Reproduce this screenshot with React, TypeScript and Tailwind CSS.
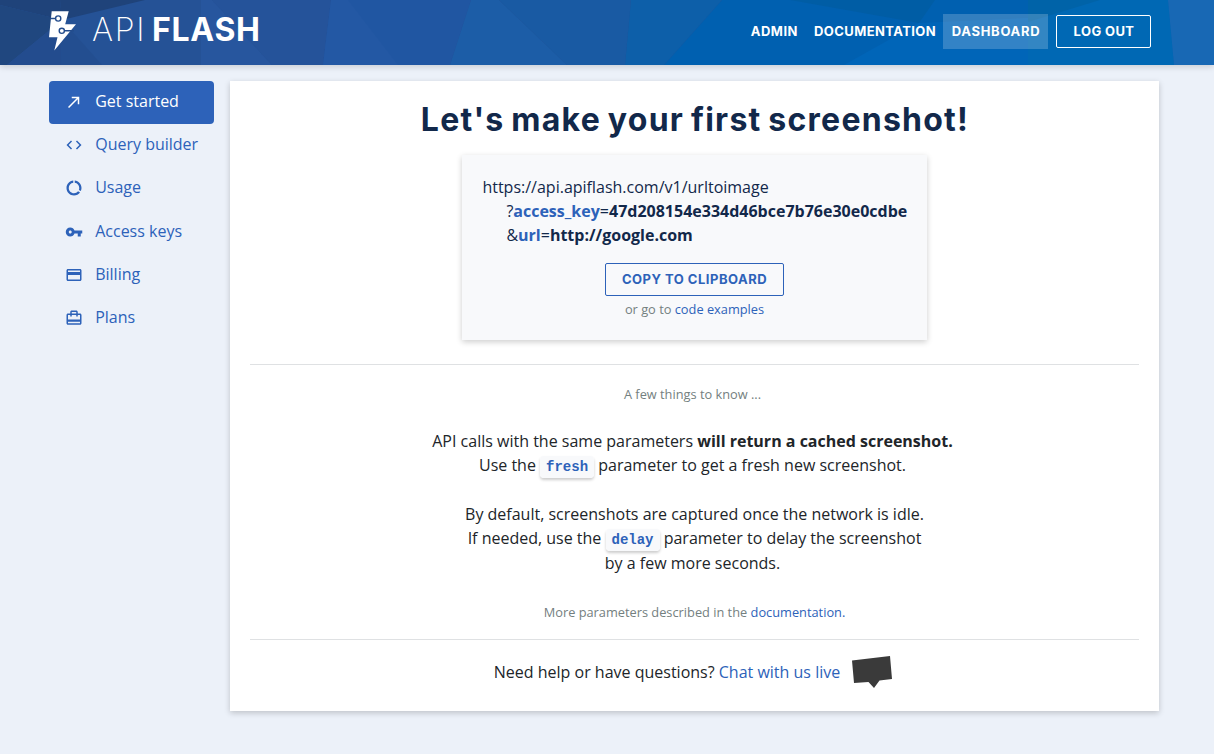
import { useState } from "react";
import type { ReactNode } from "react";
import type { IconType } from "react-icons";
import {
  MdCallMade,
  MdCardTravel,
  MdCode,
  MdDataUsage,
  MdPayment,
  MdVpnKey,
} from "react-icons/md";
import { clsx } from "clsx";

// Types
interface MenuEntry {
  id: string;
  label: string;
  icon: IconType;
}

const MENU: MenuEntry[] = [
  { id: "start", label: "Get started", icon: MdCallMade },
  { id: "query", label: "Query builder", icon: MdCode },
  { id: "usage", label: "Usage", icon: MdDataUsage },
  { id: "keys", label: "Access keys", icon: MdVpnKey },
  { id: "billing", label: "Billing", icon: MdPayment },
  { id: "plans", label: "Plans", icon: MdCardTravel },
];

const ACCESS_KEY = "47d208154e334d46bce7b76e30e0cdbe";

// Faceted banner behind the navigation
function HeaderPattern() {
  return (
    <svg
      className="absolute inset-0 h-full w-full"
      viewBox="0 0 1214 65"
      preserveAspectRatio="none"
      aria-hidden="true"
    >
      <rect width="1214" height="65" fill="#255296" />
      <polygon points="0,0 60,0 62,20 0,5" fill="#1f437a" />
      <polygon points="0,5 62,20 7,65 0,65" fill="#20477f" />
      <polygon points="60,0 145,0 62,20" fill="#1f437a" />
      <polygon points="62,20 61,65 7,65" fill="#234c8e" />
      <polygon points="62,20 102,65 61,65" fill="#234e90" />
      <polygon points="201,0 212,0 272,65 201,65" fill="#27569e" />
      <polygon points="212,0 331,0 323,65 272,65" fill="#25539a" />
      <polygon points="331,0 471,0 450,65 323,65" fill="#2056a2" />
      <polygon points="331,0 348,0 398,65 323,65" fill="#2358a4" />
      <polygon points="471,0 499,0 567,65 450,65" fill="#1c5da7" />
      <polygon points="499,0 631,0 625,65 567,65" fill="#195aa3" />
      <polygon points="631,0 722,0 664,65 625,65" fill="#0d5fa9" />
      <polygon points="722,0 1214,0 1214,65 664,65" fill="#0060b0" />
      <polygon points="790,0 935,0 919,23" fill="#005da5" />
      <polygon points="919,23 1028,18 1028,65 844,65" fill="#0065b8" />
      <polygon points="1028,0 1168,0 1174,65 1028,65" fill="#0068b4" />
      <polygon points="1028,0 1100,0 1028,22" fill="#0063a8" />
      <polygon points="1168,0 1214,0 1214,65 1174,65" fill="#1868b4" />
    </svg>
  );
}

function LogoMark() {
  return (
    <svg className="h-[40px] w-[28px]" viewBox="0 0 28 40" aria-hidden="true">
      <path d="M2.700 0.300h17L16.200 13.300H27L5.300 39.500l3.200-13.200H0z" fill="#fff" />
      <g fill="#fff" stroke="#234c8c" strokeWidth="1.4">
        <path d="M1 7.500h6M16 19.700h9" />
        <circle cx="9.2" cy="7.5" r="2.6" />
        <circle cx="12.8" cy="19.8" r="2.6" />
      </g>
    </svg>
  );
}

function Header() {
  return (
    <header className="relative h-[65px] shadow-[0_2px_6px_rgba(0,0,0,0.15)]">
      <HeaderPattern />
      <div className="relative flex h-full justify-between pl-[49px] pr-[63px]">
        <a href="#" className="flex pt-[11px] text-white">
          <LogoMark />
          <span className="ml-[15px] mt-px flex font-[Inter] text-[32px] leading-9">
            <span className="w-[60px] font-extralight tracking-[1.7px]">API</span>
            <span className="font-bold tracking-[0.7px]">FLASH</span>
          </span>
        </a>
        <nav className="flex items-center pb-[3px] font-[Inter] text-[13px] font-bold text-white">
          <a href="#" className="px-2 pt-[2px] tracking-[0.5px]">ADMIN</a>
          <a href="#" className="pl-2 pr-[7px] pt-[2px] tracking-[0.4px]">DOCUMENTATION</a>
          <a
            href="#"
            className="flex h-[35px] w-[105px] items-center justify-center bg-white/20 pl-px pt-[2px] tracking-[0.7px]"
          >
            DASHBOARD
          </a>
          <button className="ml-2 h-[33px] w-[95px] rounded-[2px] border border-white pl-px pt-[2px] tracking-[0.4px]">
            LOG OUT
          </button>
        </nav>
      </div>
    </header>
  );
}

function Sidebar({ active, onSelect }: { active: string; onSelect: (id: string) => void }) {
  return (
    <aside className="w-[165px] shrink-0">
      {MENU.map(({ id, label, icon: Icon }) => (
        <button
          key={id}
          onClick={() => onSelect(id)}
          className={clsx(
            "flex h-[43.2px] w-full items-center rounded pb-px pl-4 text-left",
            id === active ? "bg-[#2d62b9] text-white" : "text-[#2d62b9]"
          )}
        >
          <Icon className="h-[18px] w-[18px]" />
          <span className="ml-[12.2px] -mt-[2px]">{label}</span>
        </button>
      ))}
    </aside>
  );
}

function Param({ children }: { children: ReactNode }) {
  return (
    <code className="rounded bg-[#f8f9fb] px-[6px] py-[3px] font-['Liberation_Mono',monospace] text-sm font-bold text-[#2d62b9] shadow-[0_2px_3px_rgba(0,0,0,0.2)]">
      {children}
    </code>
  );
}

function Link({ children }: { children: ReactNode }) {
  return (
    <a href="#" className="text-[#2d62b9]">
      {children}
    </a>
  );
}

// Request preview with the copy button
function RequestCard() {
  return (
    <div className="mx-auto h-[185px] w-[465px] bg-[#f8f9fb] px-5 pt-5 shadow-[0_2px_6px_rgba(0,0,0,0.2)]">
      <div className="pl-[0.4px] text-left leading-6 text-[#12284a]">
        <div>https://api.apiflash.com/v1/urltoimage</div>
        <div className="pl-6 whitespace-nowrap">
          ?<b className="text-[#2d62b9]">access_key</b>=<b>{ACCESS_KEY}</b>
        </div>
        <div className="pl-6">
          &amp;<b className="text-[#2d62b9]">url</b>=<b>http://google.com</b>
        </div>
      </div>
      <button className="mt-4 h-[33px] w-[179px] rounded-[2px] border border-[#2d62b9] font-[Inter] text-[13px] font-bold tracking-[0.5px] text-[#2d62b9]">
        COPY TO CLIPBOARD
      </button>
      <p className="mt-[3px] text-[12.8px] leading-5 text-[#748080]">
        or go to <Link>code examples</Link>
      </p>
    </div>
  );
}

export default function App() {
  const [active, setActive] = useState("start");

  return (
    <div className="min-h-screen bg-[#ecf1f9] font-['Open_Sans',sans-serif] text-base text-[#212529]">
      <Header />
      <div className="flex gap-4 pl-[49px] pr-[55px] pt-4">
        <Sidebar active={active} onSelect={setActive} />
        <main className="h-[630px] flex-1 bg-white px-5 text-center shadow-[0_2px_6px_rgba(0,0,0,0.2)]">
          <h1 className="pl-px pt-[19px] font-[Inter] text-[32px] font-bold leading-[40px] tracking-[1.25px] [word-spacing:-2px] text-[#12284a]">
            Let&apos;s make your first screenshot!
          </h1>
          <div className="mt-[15px]">
            <RequestCard />
          </div>
          <hr className="mt-6 border-[#dfe1e3]" />

          {/* Tips */}
          <p className="mt-[19px] pr-1 text-[12.8px] leading-5 text-[#748080]">
            A few things to know ...
          </p>
          <p className="mt-[25px] pr-1 leading-[24.35px]">
            API calls with the same parameters <b>will return a cached screenshot.</b>
            <br />
            Use the <Param>fresh</Param> parameter to get a fresh new screenshot.
            <br />
            <br />
            <span className="pl-1">By default, screenshots are captured once the network is idle.</span>
            <br />
            <span className="pl-1">
              If needed, use the <Param>delay</Param> parameter to delay the screenshot
            </span>
            <br />
            by a few more seconds.
          </p>
          <p className="mt-[26.7px] text-[12.8px] leading-5 text-[#748080]">
            More parameters described in the <Link>documentation.</Link>
          </p>
          <hr className="mt-[17.500px] border-[#dfe1e3]" />

          {/* Support */}
          <div className="mt-4 flex justify-center pr-[3px]">
            <p className="mt-1 leading-6">
              Need help or have questions? <Link>Chat with us live</Link>
            </p>
            <svg className="ml-3 h-8 w-10" viewBox="0 0 40 32" aria-hidden="true">
              <path d="M0 4.5 38 0l2 23-12.500 1.500L22 32l-5.500-6L2 27z" fill="#3a3a3a" />
            </svg>
          </div>
        </main>
      </div>
    </div>
  );
}
